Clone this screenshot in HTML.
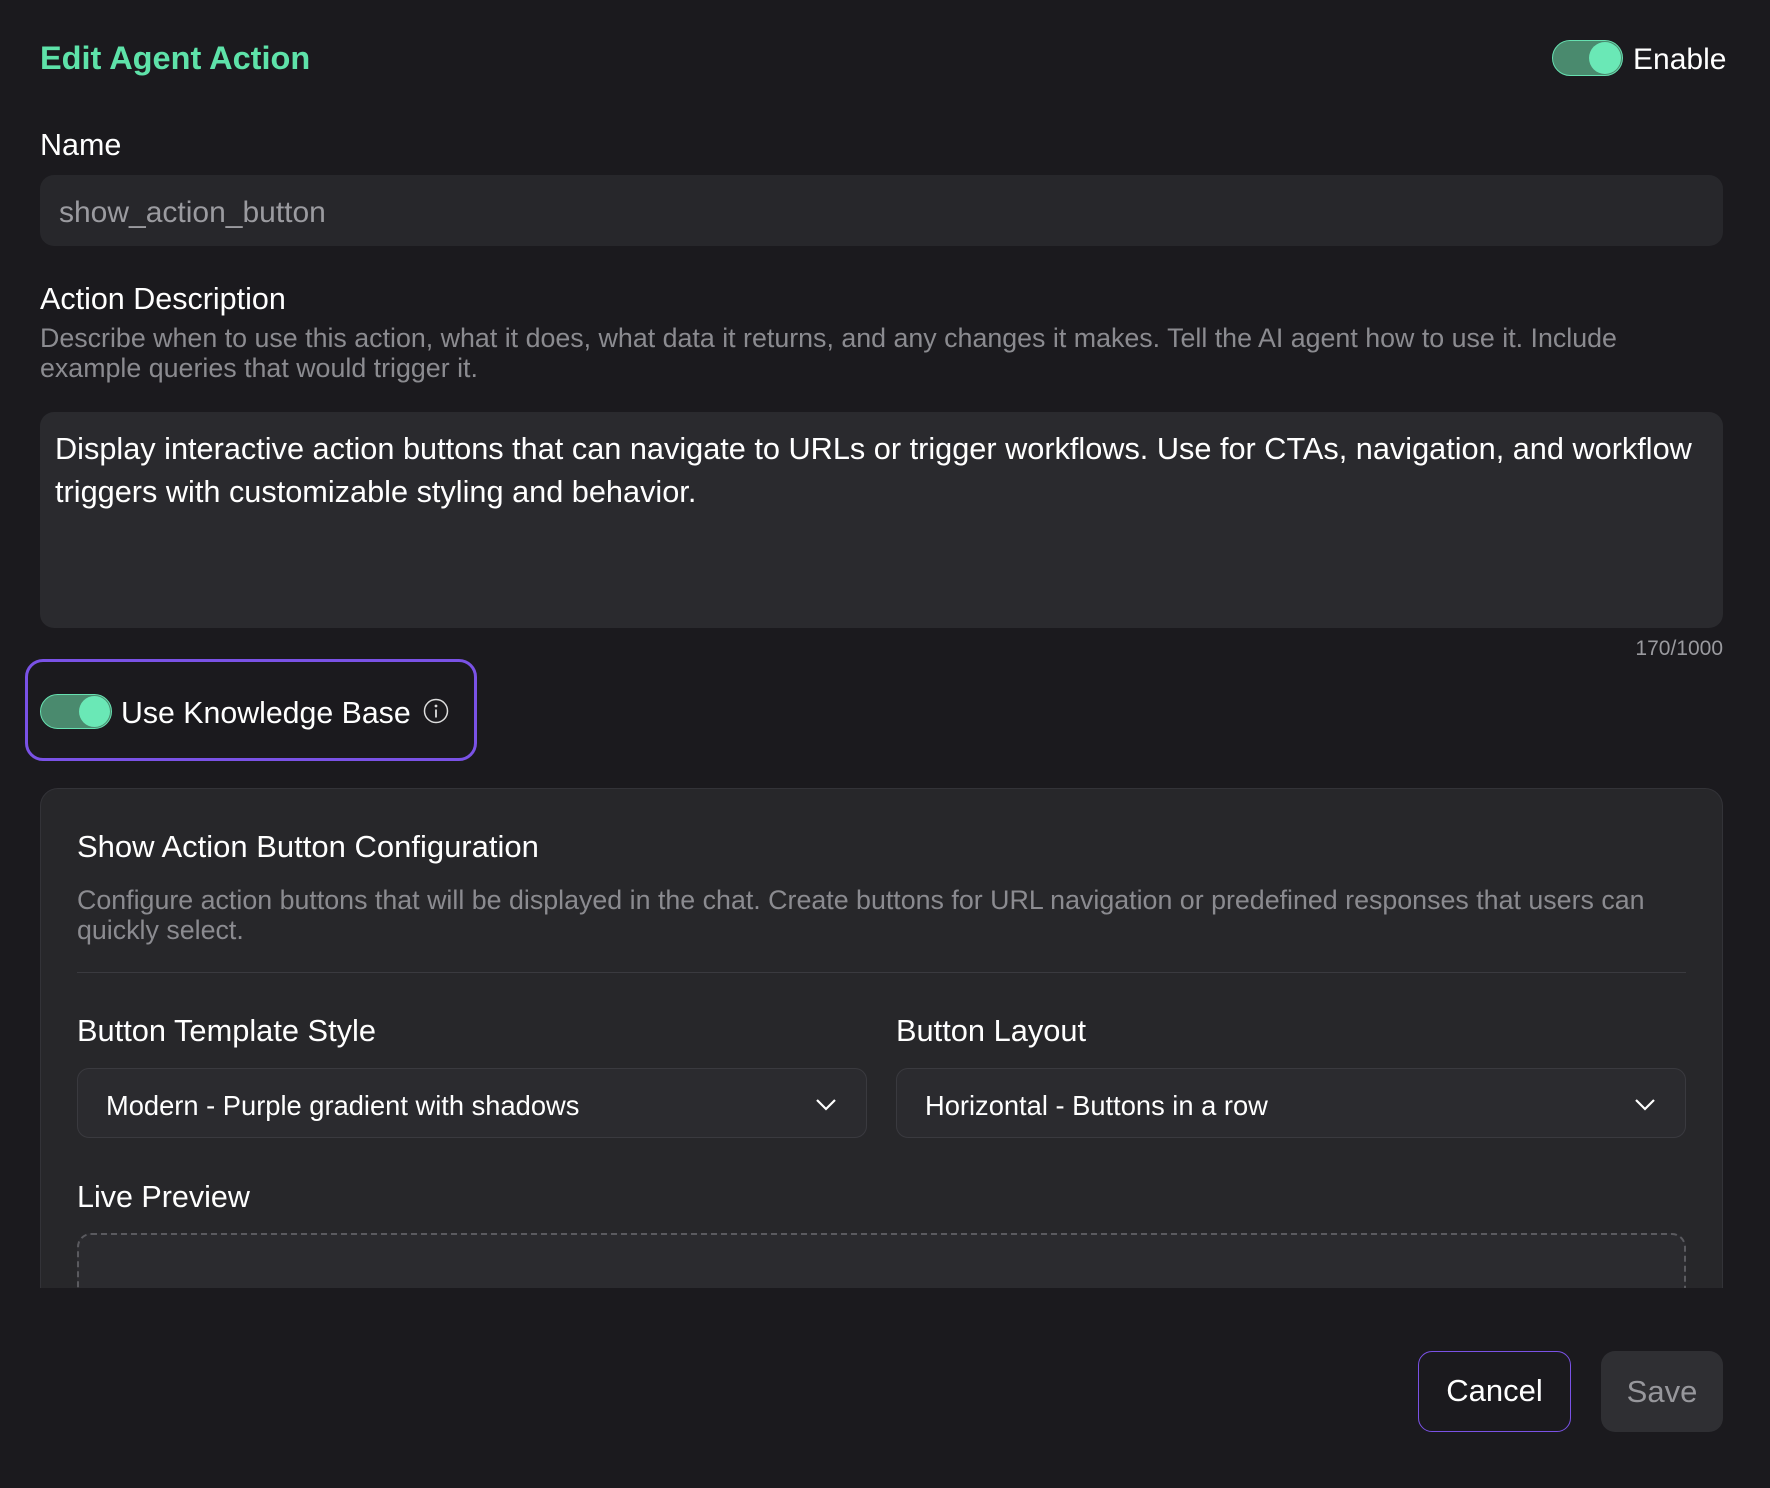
<!DOCTYPE html>
<html><head><meta charset="utf-8"><style>
*{box-sizing:border-box;margin:0;padding:0}
body{width:1770px;height:1476px;background:#1b1a1e;font-family:"Liberation Sans",sans-serif;color:#fff;position:relative;overflow:hidden}
.a{position:absolute;white-space:nowrap}
.tog{position:absolute;border-radius:20px;background:#4a8a6e;border:1.5px solid #66e0b0}
.tog i{position:absolute;top:1px;right:1px;border-radius:50%;background:#6ae8b6}
.lbl{font-size:30.5px;line-height:1}
.help{font-size:26.8px;color:#8b8b90;line-height:30px}
.sel{position:absolute;top:1068px;height:70px;width:790px;border:1px solid #3a3a3f;border-radius:12px;background:#2b2b2f}
.sel span{position:absolute;left:28px;top:21px;font-size:27.3px}
.sel svg{position:absolute;right:28px;top:24px}
</style></head><body>
<div class="a" style="left:40px;top:40px;font-size:32.5px;font-weight:bold;color:#5ee2a9">Edit Agent Action</div>
<div class="tog" style="left:1552px;top:40px;width:71px;height:36px"><i style="width:32px;height:32px"></i></div>
<div class="a" style="left:1633px;top:43px;font-size:30px">Enable</div>

<div class="a lbl" style="left:40px;top:130px">Name</div>
<div class="a" style="left:40px;top:175px;width:1683px;height:71px;background:#27272b;border-radius:14px"></div>
<div class="a" style="left:59px;top:196px;font-size:30px;color:#9b9ba0">show_action_button</div>

<div class="a lbl" style="left:40px;top:284px">Action Description</div>
<div class="a help" style="left:40px;top:323px">Describe when to use this action, what it does, what data it returns, and any changes it makes. Tell the AI agent how to use it. Include<br>example queries that would trigger it.</div>
<div class="a" style="left:40px;top:412px;width:1683px;height:216px;background:#2a2a2e;border-radius:14px"></div>
<div class="a" style="left:55px;top:427px;font-size:30.7px;line-height:43px">Display interactive action buttons that can navigate to URLs or trigger workflows. Use for CTAs, navigation, and workflow<br>triggers with customizable styling and behavior.</div>
<div class="a" style="right:47px;top:637px;font-size:21px;color:#9a9a9f">170/1000</div>

<div class="a" style="left:25px;top:659px;width:452px;height:102px;border:3px solid #7a52e6;border-radius:18px"></div>
<div class="tog" style="left:40px;top:694px;width:72px;height:35px"><i style="width:31px;height:31px"></i></div>
<div class="a" style="left:121px;top:697px;font-size:30.3px">Use Knowledge Base</div>
<svg class="a" style="left:423px;top:698px" width="26" height="26" viewBox="0 0 26 26"><circle cx="13" cy="13" r="11.5" fill="none" stroke="#ddd" stroke-width="1.5"/><circle cx="13" cy="8" r="1.4" fill="#ddd"/><path d="M13 11.5v8" stroke="#ddd" stroke-width="1.8"/></svg>

<div class="a" style="left:40px;top:788px;width:1683px;height:520px;background:#27272a;border:1px solid #333338;border-radius:18px"></div>
<div class="a" style="left:40px;top:1288px;width:1700px;height:200px;background:#1b1a1e"></div>
<div class="a" style="left:77px;top:831px;font-size:31px;line-height:1">Show Action Button Configuration</div>
<div class="a help" style="left:77px;top:885px">Configure action buttons that will be displayed in the chat. Create buttons for URL navigation or predefined responses that users can<br>quickly select.</div>
<div class="a" style="left:77px;top:972px;width:1609px;height:1px;background:#3a3a3f"></div>
<div class="a lbl" style="left:77px;top:1016px;font-size:30.8px">Button Template Style</div>
<div class="a lbl" style="left:896px;top:1016px;font-size:30.8px">Button Layout</div>
<div class="sel" style="left:77px"><span>Modern - Purple gradient with shadows</span><svg width="24" height="22" viewBox="0 0 24 22"><path d="M3 7l9 9 9-9" fill="none" stroke="#fff" stroke-width="2.2"/></svg></div>
<div class="sel" style="left:896px"><span>Horizontal - Buttons in a row</span><svg width="24" height="22" viewBox="0 0 24 22"><path d="M3 7l9 9 9-9" fill="none" stroke="#fff" stroke-width="2.2"/></svg></div>
<div class="a lbl" style="left:77px;top:1182px;font-size:30.5px">Live Preview</div>
<div class="a" style="left:77px;top:1233px;width:1609px;height:55px;border:2.5px dashed #5a5a5f;border-bottom:none;border-radius:14px 14px 0 0;background:#2b2b2f"></div>

<div class="a" style="left:1418px;top:1351px;width:153px;height:81px;border:1.5px solid #7a52e6;border-radius:14px;text-align:center;line-height:78px;font-size:31px">Cancel</div>
<div class="a" style="left:1601px;top:1351px;width:122px;height:81px;background:#2f2f33;border-radius:14px;text-align:center;line-height:81px;font-size:31px;color:#97979c">Save</div>
</body></html>
